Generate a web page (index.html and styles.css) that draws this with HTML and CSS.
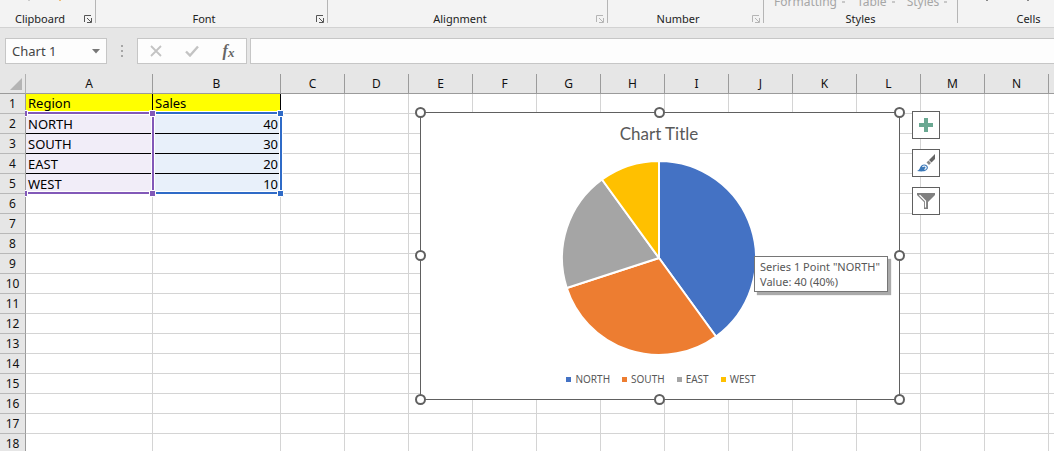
FILE: index.html
```html
<!DOCTYPE html>
<html lang="en">
<head>
<meta charset="utf-8">
<title>Chart 1</title>
<link rel="stylesheet" href="styles.css">
</head>
<body>
<svg class="defs" width="0" height="0" aria-hidden="true">
  <symbol id="launcher" viewBox="0 0 8 8"><path d="M.5 7V.5H7M3 3l4 4M7.500 3v4.500H3" fill="none" stroke="currentColor"/></symbol>
</svg>
<header class="ribbon">
  <section class="group clipboard">
    <div class="marks"><i class="speck"></i><i class="speck orange"></i></div>
    <div class="caption"><span>Clipboard</span><button class="launch" aria-label="Clipboard settings"><svg><use href="#launcher"/></svg></button></div>
  </section>
  <section class="group font">
    <div class="caption"><span>Font</span><button class="launch" aria-label="Font settings"><svg><use href="#launcher"/></svg></button></div>
  </section>
  <section class="group alignment">
    <div class="caption"><span>Alignment</span><button class="launch dim" aria-label="Alignment settings"><svg><use href="#launcher"/></svg></button></div>
  </section>
  <section class="group number">
    <div class="caption"><span>Number</span><button class="launch dim" aria-label="Number settings"><svg><use href="#launcher"/></svg></button></div>
  </section>
  <section class="group styles">
    <div class="tools"><button disabled>Formatting<i></i></button><button disabled>Table<i></i></button><button disabled>Styles<i></i></button></div>
    <div class="caption"><span>Styles</span></div>
  </section>
  <section class="group cells">
    <div class="marks"><i class="speck dark"></i><i class="speck dark"></i></div>
    <div class="caption"><span>Cells</span></div>
  </section>
</header>

<div class="formula-bar">
  <div class="name-box">
    <input type="text" value="Chart 1" aria-label="Name box">
    <button aria-label="Show names"><svg width="8" height="5" viewBox="0 0 8 5"><path d="M0 0h8L4 4.500z" fill="#777"/></svg></button>
  </div>
  <svg class="grip" width="2" height="12" viewBox="0 0 2 12"><path d="M0 0h2v2H0zM0 5h2v2H0zM0 10h2v2H0z" fill="#a6a6a6"/></svg>
  <div class="actions">
    <button aria-label="Cancel"><svg width="12" height="12" viewBox="0 0 12 12"><path d="M1 1l10 10M11 1L1 11" stroke="#c3c3c3" stroke-width="1.800"/></svg></button>
    <button aria-label="Enter"><svg width="14" height="12" viewBox="0 0 14 12"><path d="M1 6.500l4 4L13 1.500" fill="none" stroke="#c3c3c3" stroke-width="2.400"/></svg></button>
    <button class="fx" aria-label="Insert function">f<sub>x</sub></button>
  </div>
  <input class="formula" type="text" aria-label="Formula">
</div>

<main class="sheet">
  <table class="grid">
    <colgroup><col class="c-head"><col class="c-a"><col class="c-b"><col span="13" class="c-std"></colgroup>
    <thead>
      <tr><th class="corner"><svg width="12" height="12" viewBox="0 0 12 12"><path d="M12 0v12H0z" fill="#b4b4b4"/></svg></th><th>A</th><th>B</th><th>C</th><th>D</th><th>E</th><th>F</th><th>G</th><th>H</th><th>I</th><th>J</th><th>K</th><th>L</th><th>M</th><th>N</th><th></th></tr>
    </thead>
    <tbody>
      <tr class="titles"><th>1</th><td>Region</td><td>Sales</td><td></td><td></td><td></td><td></td><td></td><td></td><td></td><td></td><td></td><td></td><td></td><td></td><td></td></tr>
      <tr class="data"><th>2</th><td>NORTH</td><td>40</td><td></td><td></td><td></td><td></td><td></td><td></td><td></td><td></td><td></td><td></td><td></td><td></td><td></td></tr>
      <tr class="data"><th>3</th><td>SOUTH</td><td>30</td><td></td><td></td><td></td><td></td><td></td><td></td><td></td><td></td><td></td><td></td><td></td><td></td><td></td></tr>
      <tr class="data"><th>4</th><td>EAST</td><td>20</td><td></td><td></td><td></td><td></td><td></td><td></td><td></td><td></td><td></td><td></td><td></td><td></td><td></td></tr>
      <tr class="data"><th>5</th><td>WEST</td><td>10</td><td></td><td></td><td></td><td></td><td></td><td></td><td></td><td></td><td></td><td></td><td></td><td></td><td></td></tr>
      <tr><th>6</th><td></td><td></td><td></td><td></td><td></td><td></td><td></td><td></td><td></td><td></td><td></td><td></td><td></td><td></td><td></td></tr>
      <tr><th>7</th><td></td><td></td><td></td><td></td><td></td><td></td><td></td><td></td><td></td><td></td><td></td><td></td><td></td><td></td><td></td></tr>
      <tr><th>8</th><td></td><td></td><td></td><td></td><td></td><td></td><td></td><td></td><td></td><td></td><td></td><td></td><td></td><td></td><td></td></tr>
      <tr><th>9</th><td></td><td></td><td></td><td></td><td></td><td></td><td></td><td></td><td></td><td></td><td></td><td></td><td></td><td></td><td></td></tr>
      <tr><th>10</th><td></td><td></td><td></td><td></td><td></td><td></td><td></td><td></td><td></td><td></td><td></td><td></td><td></td><td></td><td></td></tr>
      <tr><th>11</th><td></td><td></td><td></td><td></td><td></td><td></td><td></td><td></td><td></td><td></td><td></td><td></td><td></td><td></td><td></td></tr>
      <tr><th>12</th><td></td><td></td><td></td><td></td><td></td><td></td><td></td><td></td><td></td><td></td><td></td><td></td><td></td><td></td><td></td></tr>
      <tr><th>13</th><td></td><td></td><td></td><td></td><td></td><td></td><td></td><td></td><td></td><td></td><td></td><td></td><td></td><td></td><td></td></tr>
      <tr><th>14</th><td></td><td></td><td></td><td></td><td></td><td></td><td></td><td></td><td></td><td></td><td></td><td></td><td></td><td></td><td></td></tr>
      <tr><th>15</th><td></td><td></td><td></td><td></td><td></td><td></td><td></td><td></td><td></td><td></td><td></td><td></td><td></td><td></td><td></td></tr>
      <tr><th>16</th><td></td><td></td><td></td><td></td><td></td><td></td><td></td><td></td><td></td><td></td><td></td><td></td><td></td><td></td><td></td></tr>
      <tr><th>17</th><td></td><td></td><td></td><td></td><td></td><td></td><td></td><td></td><td></td><td></td><td></td><td></td><td></td><td></td><td></td></tr>
      <tr><th>18</th><td></td><td></td><td></td><td></td><td></td><td></td><td></td><td></td><td></td><td></td><td></td><td></td><td></td><td></td><td></td></tr>
    </tbody>
  </table>

  <svg class="ranges" width="260" height="89" viewBox="0 0 260 89" aria-hidden="true">
    <g fill="none" stroke="#fff" stroke-width="4"><path d="M1 4h255v80H1M128 4v80"/></g>
    <g fill="none" stroke-width="2"><path d="M128 4h128v80H128" stroke="#2f6bc7"/><path d="M1 4h127v80H1" stroke="#8259b8"/></g>
    <g stroke="#fff" fill="#8259b8"><path d="M-3.500 1.500h6v6h-6zM124.500 1.500h6v6h-6zM-3.500 81.500h6v6h-6zM124.500 81.500h6v6h-6z"/></g>
    <g stroke="#fff" fill="#2f6bc7"><path d="M252.500 1.500h6v6h-6zM252.500 81.500h6v6h-6z"/></g>
  </svg>

  <figure class="chart">
    <figcaption>Chart Title</figcaption>
    <svg class="pie" width="196" height="196" viewBox="-98 -98 196 196" role="img" aria-label="Sales by region">
      <g stroke="#fff" stroke-width="2" stroke-linejoin="round">
        <path fill="#4472c4" d="M0 0V-97A97 97 0 0 1 57.010 78.470z"/>
        <path fill="#ed7d31" d="M0 0L57.010 78.470A97 97 0 0 1-92.250 29.970z"/>
        <path fill="#a5a5a5" d="M0 0L-92.250 29.970A97 97 0 0 1-57.010-78.470z"/>
        <path fill="#ffc000" d="M0 0L-57.010-78.470A97 97 0 0 1 0-97z"/>
      </g>
    </svg>
    <ul class="legend"><li class="north">NORTH</li><li class="south">SOUTH</li><li class="east">EAST</li><li class="west">WEST</li></ul>
    <i class="handle tl"></i><i class="handle tc"></i><i class="handle tr"></i><i class="handle ml"></i><i class="handle mr"></i><i class="handle bl"></i><i class="handle bc"></i><i class="handle br"></i>
    <div class="tooltip" role="tooltip">Series 1 Point "NORTH"<br>Value: 40 (40%)</div>
    <div class="chart-tools">
      <button aria-label="Chart elements"><svg width="18" height="18" viewBox="0 0 18 18"><path d="M7 2h4v5h5v4h-5v5H7v-5H2V7h5z" fill="#6aa892"/></svg></button>
      <button aria-label="Chart styles"><svg width="18" height="18" viewBox="0 0 18 18"><path d="M18 0v5L14.500 8.500 12 6z" fill="#666"/><path d="M11.500 6.500l2.500 2.500-2 2L9.500 8.500z" fill="#888"/><path d="M0 17c3-1 2.500-3.500 4.500-5.500 1.500-1.500 4-1.500 5.500 0s1 3.500-.5 4.500C7 18 3 17.500 0 17z" fill="#3b78b8"/><path d="M5.500 13c1-1.500 3-1.200 3.500 0s-.5 2-1.500 2.500" fill="none" stroke="#fff" stroke-width="1.200"/></svg></button>
      <button aria-label="Chart filters"><svg width="18" height="18" viewBox="0 0 18 18"><path d="M0 1h18v2l-7 7v7H7v-7L0 3z" fill="#808080"/><path d="M2.500 3l6 6v6.500" fill="none" stroke="#fff" stroke-width="1.200"/></svg></button>
    </div>
  </figure>
</main>
</body>
</html>
```

FILE: styles.css
```css
* { box-sizing: border-box; }
body {
  margin: 0;
  height: 100vh;
  display: flex;
  flex-direction: column;
  overflow: hidden;
  background: #e6e6e6;
  color: #222;
  font-family: "Noto Sans", "Open Sans", sans-serif;
  font-size: 12px;
}
button, input { font: inherit; color: inherit; margin: 0; padding: 0; border: 0; background: none; }
.defs { position: absolute; }

.ribbon {
  flex: none;
  display: flex;
  height: 28px;
  overflow: hidden;
  background: #f3f3f3;
  border-bottom: 1px solid #d2d2d2;
}
.group {
  flex: none;
  display: flex;
  flex-direction: column;
  justify-content: flex-end;
  height: 23px;
  border-right: 1px solid #b5b5b5;
}
.clipboard { width: 96px; }
.font { width: 232px; }
.alignment { width: 280px; }
.number { width: 156px; }
.styles { width: 194px; }
.cells { width: 142px; }
.caption { flex: none; display: flex; align-items: flex-end; height: 11px; font-size: 11px; line-height: 16px; margin-top: 11px; padding-right: 3px; }
.caption span { flex: 1; text-align: center; margin-bottom: -4px; }
.launch { width: 12px; height: 8px; display: flex; justify-content: flex-end; color: #555; }
.launch svg { width: 8px; height: 8px; }
.launch.dim { color: #b5b5b5; }
.styles .caption, .cells .caption { padding-right: 0; }
.marks { display: flex; justify-content: space-between; height: 1px; padding: 0 34px 0 28px; }
.cells .marks { padding: 0 70px 0 28px; }
.speck { width: 2px; height: 1px; background: #ccc; }
.speck.orange { background: #efbd76; }
.speck.dark { background: #888; }
.tools { flex: none; display: flex; gap: 12px; height: 16px; padding-left: 10px; margin-bottom: -9px; color: #a6a6a6; }
.tools button { display: flex; align-items: center; gap: 5px; line-height: 16px; }
.tools i { width: 3px; height: 2px; background: #c8c8c8; }

.formula-bar { flex: none; display: flex; align-items: center; height: 46px; padding-left: 5px; }
.name-box, .actions { display: flex; align-items: center; height: 26px; background: #fdfdfd; border: 1px solid #c6c6c6; }
.name-box { width: 102px; padding: 0 6px; color: #444; }
.name-box input { flex: 1; min-width: 0; font-size: 13px; }
.name-box button { display: flex; }
.grip { margin: 0 14px; }
.actions { width: 110px; padding: 0 9px; justify-content: space-between; }
.actions button { display: flex; justify-content: center; align-items: center; width: 17px; }
.actions .fx { font: italic bold 16px/18px "Liberation Serif", serif; color: #666; }
.fx sub { font-size: 13px; line-height: 15px; align-self: flex-end; }
.formula { flex: 1; height: 26px; margin-left: 3px; background: #fdfdfd; border: 1px solid #c6c6c6; border-right: 0; }

.sheet { position: relative; flex: 1; overflow: hidden; background: #fff; }
.grid { width: 1113px; table-layout: fixed; border-collapse: separate; border-spacing: 0; }
.c-head { width: 26px; }
.c-a { width: 127px; }
.c-b { width: 128px; }
.c-std { width: 64px; }
.grid th, .grid td { height: 20px; padding: 0; line-height: 18px; overflow: hidden; border-right: 1px solid #d4d4d4; border-bottom: 1px solid #d4d4d4; }
.grid th { background: #e6e6e6; color: #111; font-size: 12px; font-weight: 400; text-align: center; }
.grid thead th { border-color: #9b9b9b; }
.grid tbody th { border-right-color: #9b9b9b; border-bottom-color: #b8b8b8; }
.grid .corner { vertical-align: bottom; text-align: right; padding: 0 3px 3px 0; line-height: 12px; border-right-color: #b0b0b0; }
.corner svg { display: inline-block; vertical-align: bottom; }
.grid td { font-size: 13px; color: #000; }
.grid td:nth-child(2), .grid td:nth-child(3) { padding: 0 2px; }
.grid .titles td { line-height: 17px; }
.titles td:nth-child(2), .titles td:nth-child(3) { background: #ff0; border-right-color: #000; }
.data td:nth-child(2) { background: #f1edf8; border-bottom-color: #000; }
.data td:nth-child(3) { background: #e8f0fa; border-bottom-color: #000; text-align: right; }
.ranges { position: absolute; left: 25px; top: 35px; }

.chart {
  position: absolute;
  left: 420px;
  top: 38px;
  width: 480px;
  height: 288px;
  margin: 0;
  padding-right: 2px;
  display: flex;
  flex-direction: column;
  align-items: center;
  background: #fff;
  border: 1px solid #606060;
  color: #595959;
}
.chart figcaption { font: 17px/24px Lato, sans-serif; margin-top: 9px; }
.pie { margin-top: 14px; flex: none; }
.legend { display: flex; gap: 12px; margin: 14px 0 0; padding: 0 0 0 4px; list-style: none; font-size: 10px; line-height: 18px; }
.legend li { display: flex; align-items: center; gap: 4px; }
.legend li::before { content: ""; width: 5px; height: 5px; background: currentColor; }
.legend .north::before { background: #4472c4; }
.legend .south::before { background: #ed7d31; }
.legend .east::before { background: #a5a5a5; }
.legend .west::before { background: #ffc000; }
.handle { position: absolute; width: 11px; height: 11px; margin: -6px 0 0 -6px; border: 2px solid #606060; border-radius: 50%; background: #fff; }
.tl, .ml, .bl { left: 0; }
.tc, .bc { left: 50%; }
.tr, .mr, .br { left: 100%; margin-left: -5px; }
.tl, .tc, .tr { top: 0; }
.ml, .mr { top: 50%; }
.bl, .bc, .br { top: 100%; margin-top: -5px; }
.tooltip {
  position: absolute;
  left: 333px;
  top: 143px;
  padding: 2px 7px 2px 5px;
  background: #fff;
  border: 1px solid #767676;
  box-shadow: 3px 3px 1px #aaa;
  font-size: 11px;
  line-height: 15px;
  white-space: nowrap;
  color: #575757;
}
.chart-tools { position: absolute; left: 491px; top: -2px; display: flex; flex-direction: column; gap: 10px; }
.chart-tools button { display: grid; place-items: center; width: 28px; height: 28px; background: #fff; border: 1px solid #606060; }
```
